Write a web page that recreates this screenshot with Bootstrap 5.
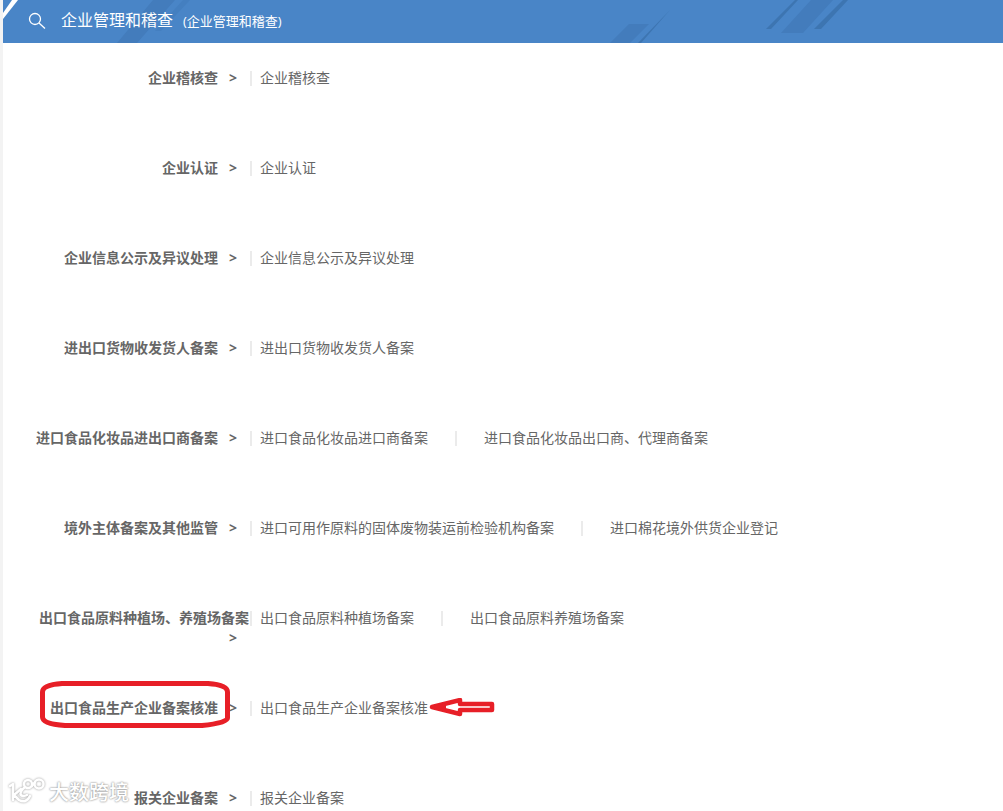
<!DOCTYPE html>
<html lang="zh-CN">
<head>
<meta charset="utf-8">
<meta name="viewport" content="width=device-width, initial-scale=1">
<title>企业管理和稽查</title>
<link href="https://cdn.jsdelivr.net/npm/bootstrap@5.3.0/dist/css/bootstrap.min.css" rel="stylesheet">
<style>
body{font:14px/20px "Open Sans","Noto Sans CJK SC",sans-serif;color:#666;background:#fff}
.page{border-left:3px solid #f3f3f3}
.topbar{height:43px;background:#4985c7;color:#fff;padding:0 0 2px 24px}
.topbar .deco{left:0;top:0}
.topbar h1{font-size:16px;line-height:24px;margin:0 10px 2px 14px;font-weight:400}
.topbar .sub{font-size:13px}
.topic{min-height:90px;padding-top:25px}
.topic:last-child{min-height:48px}
.topic-name{width:246px;padding-left:31px;margin-right:1px;font-size:14px;line-height:20px;margin-bottom:0;font-weight:700}
.chev{display:inline-block;width:9px;margin:0 12px 0 10px}
.links a{color:#666;text-decoration:none}
.links a:hover{color:#4985c7}
.links li{display:flex;align-items:center}
.links li::before{content:"";width:2px;height:15px;background:#ebebeb;margin-right:27px}
.links li:first-child::before{margin-right:8px}
.links li + li{margin-left:27px}
.ring{left:37px;top:8px}
.arrow{left:100%;top:0}
.mark-logo{left:4px;top:15px;color:#fff;font:500 20px/28px "Noto Sans CJK SC",sans-serif;text-shadow:0 0 2px #999,0 0 2px #aaa}
.mark-logo svg{filter:drop-shadow(0 0 1px #999)}
</style>
</head>
<body>
<div class="page min-vh-100">
<header class="topbar position-relative d-flex align-items-center overflow-hidden">
  <svg class="deco position-absolute" width="1000" height="43" aria-hidden="true">
    <path d="M0 13V19L15 0H9Z" fill="#fff"/>
    <path d="M150 0H172L134 43H114ZM626 24H646L627 43H607ZM808 0H830L800 33H778Z" fill="#437cbc"/>
    <path d="M180 0H187L158 31H152Z" fill="#447fc0"/>
    <path d="M667 10L638 43H635ZM792 0H795L768 29H763ZM840 0H845L818 29H811Z" fill="#3d75b1"/>
  </svg>
  <svg class="position-relative" width="20" height="20" fill="none" stroke="#fff" stroke-width="1.3" aria-hidden="true"><circle cx="8" cy="8" r="5.500"/><path d="M12 12L18 17.500"/></svg>
  <h1 class="position-relative">企业管理和稽查</h1><span class="sub position-relative">(企业管理和稽查)</span>
</header>
<main>
  <section class="topic d-flex align-items-start"><h2 class="topic-name text-end flex-shrink-0">企业稽核查<span class="chev">&gt;</span></h2><ul class="links list-unstyled d-flex mb-0"><li><a href="#">企业稽核查</a></li></ul></section>
  <section class="topic d-flex align-items-start"><h2 class="topic-name text-end flex-shrink-0">企业认证<span class="chev">&gt;</span></h2><ul class="links list-unstyled d-flex mb-0"><li><a href="#">企业认证</a></li></ul></section>
  <section class="topic d-flex align-items-start"><h2 class="topic-name text-end flex-shrink-0">企业信息公示及异议处理<span class="chev">&gt;</span></h2><ul class="links list-unstyled d-flex mb-0"><li><a href="#">企业信息公示及异议处理</a></li></ul></section>
  <section class="topic d-flex align-items-start"><h2 class="topic-name text-end flex-shrink-0">进出口货物收发货人备案<span class="chev">&gt;</span></h2><ul class="links list-unstyled d-flex mb-0"><li><a href="#">进出口货物收发货人备案</a></li></ul></section>
  <section class="topic d-flex align-items-start"><h2 class="topic-name text-end flex-shrink-0">进口食品化妆品进出口商备案<span class="chev">&gt;</span></h2><ul class="links list-unstyled d-flex mb-0"><li><a href="#">进口食品化妆品进口商备案</a></li><li><a href="#">进口食品化妆品出口商、代理商备案</a></li></ul></section>
  <section class="topic d-flex align-items-start"><h2 class="topic-name text-end flex-shrink-0">境外主体备案及其他监管<span class="chev">&gt;</span></h2><ul class="links list-unstyled d-flex mb-0"><li><a href="#">进口可用作原料的固体废物装运前检验机构备案</a></li><li><a href="#">进口棉花境外供货企业登记</a></li></ul></section>
  <section class="topic d-flex align-items-start"><h2 class="topic-name text-end flex-shrink-0">出口食品原料种植场、养殖场备案<span class="chev">&gt;</span></h2><ul class="links list-unstyled d-flex mb-0"><li><a href="#">出口食品原料种植场备案</a></li><li><a href="#">出口食品原料养殖场备案</a></li></ul></section>
  <section class="topic d-flex align-items-start position-relative"><h2 class="topic-name text-end flex-shrink-0">出口食品生产企业备案核准<span class="chev">&gt;</span></h2><ul class="links list-unstyled d-flex mb-0"><li><a class="position-relative" href="#">出口食品生产企业备案核准<svg class="arrow position-absolute" width="67" height="20" aria-hidden="true"><path d="M4 9L32 2V6H64V12H32V16Z" fill="none" stroke="#e71f27" stroke-width="4.500" stroke-linejoin="round"/><path d="M3 9L18 5V13Z" fill="#e71f27"/></svg></a></li></ul>
    <svg class="ring position-absolute" width="190" height="47" aria-hidden="true"><path d="M22 2.500H168Q187.500 4 187.500 11V37Q187.500 42 162 44.500H25Q2.500 43 2.500 36V11Q2.500 4 22 2.500Z" fill="none" stroke="#e71f27" stroke-width="5"/></svg>
  </section>
  <section class="topic d-flex align-items-start position-relative"><h2 class="topic-name text-end flex-shrink-0">报关企业备案<span class="chev">&gt;</span></h2><ul class="links list-unstyled d-flex mb-0"><li><a href="#">报关企业备案</a></li></ul>
    <div class="mark-logo position-absolute d-flex align-items-center gap-1"><svg width="38" height="28" fill="none" stroke="#fff" stroke-width="2.500" stroke-linecap="round" stroke-linejoin="round" aria-hidden="true"><path d="M3 8L6 6V22M14 11L7 17L12 22Q19 26 23 18"/><circle cx="21" cy="6" r="4"/><circle cx="32" cy="6" r="4.500"/><path d="M25 8L28 4M18 9Q12 14 14 17Q16 19 20 17"/></svg><span>大数跨境</span></div>
  </section>
</main>
</div>
<script src="https://cdn.jsdelivr.net/npm/bootstrap@5.3.0/dist/js/bootstrap.bundle.min.js"></script>
</body>
</html>
